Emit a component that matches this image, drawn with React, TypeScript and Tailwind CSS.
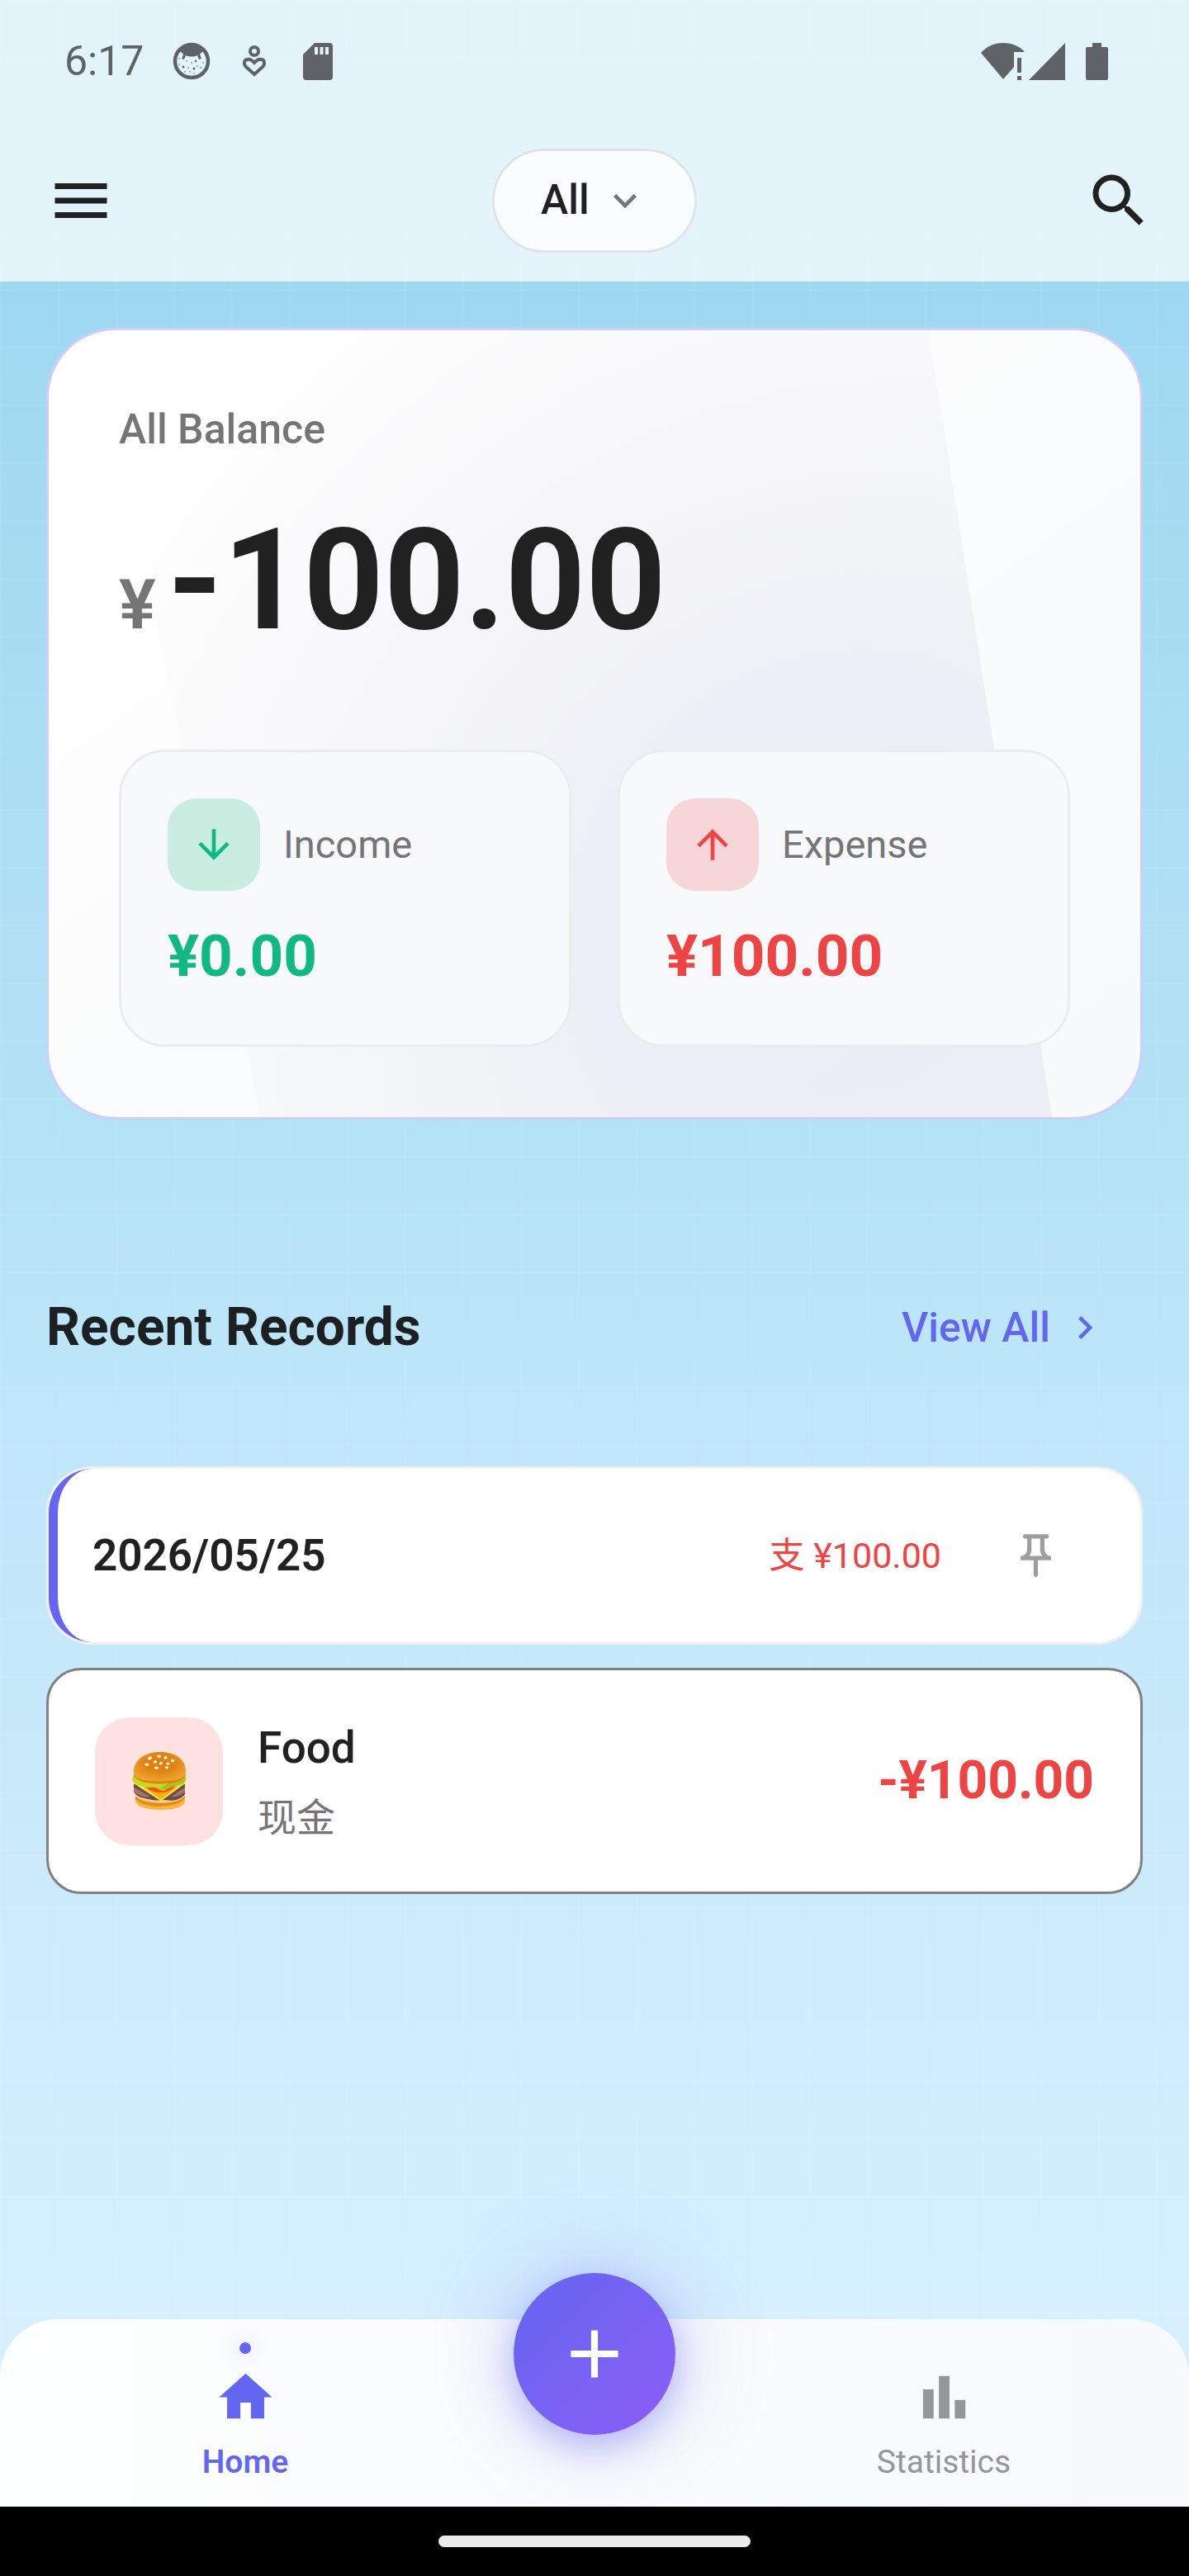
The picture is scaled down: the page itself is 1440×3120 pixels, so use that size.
/**
 * 记账首页
 * 余额卡片 + 最近记录 + 底部导航
 */

import { useState } from 'react';
import type { ReactNode } from 'react';
import {
  MdAdd,
  MdArrowDownward,
  MdArrowUpward,
  MdChevronRight,
  MdHome,
  MdKeyboardArrowDown,
  MdMenu,
  MdSearch,
} from 'react-icons/md';

interface RecordItem {
  id: string;
  category: string;
  account: string;
  amount: string;
}

const records: RecordItem[] = [
  { id: '1', category: 'Food', account: '现金', amount: '-¥100.00' },
];

// 状态栏
function StatusBar() {
  return (
    <div className="flex h-[146px] items-center justify-between pl-[78px] pr-[94px] pt-0.5 text-[#5f6368]">
      <div className="flex items-center">
        <span className="text-[50px] leading-[56px]">6:17</span>
        <svg viewBox="0 0 46 46" className="ml-[35px] size-[46px]" fill="currentColor" aria-hidden="true">
          <circle cx="23" cy="23" r="20" fill="none" stroke="currentColor" strokeWidth="4.5" />
          <path d="M8 9C12 4 17 1 23 1s11 3 15 8l-2 3c-1 0-2 2-3 3l2 5-3 1-2-5c-4 2-10 2-14 0l-2 5-3-1 2-5c-1-1-2-3-3-3z" />
          <circle cx="8" cy="20" r="0.8" />
          <circle cx="8" cy="27" r="0.8" />
          <circle cx="13" cy="30" r="1.500" />
          <circle cx="17" cy="23" r="0.8" />
          <circle cx="19" cy="31" r="0.8" />
          <circle cx="23" cy="25" r="0.8" />
          <circle cx="28" cy="23" r="1.300" />
          <circle cx="30" cy="29" r="0.8" />
          <circle cx="26" cy="32" r="1.500" />
          <circle cx="34" cy="31" r="0.8" />
          <circle cx="37" cy="25" r="0.8" />
          <circle cx="15" cy="36" r="0.8" />
          <circle cx="21" cy="36" r="0.8" />
          <circle cx="26" cy="38" r="0.8" />
        </svg>
        <svg
          viewBox="0 0 30 40"
          className="ml-[38px] h-10 w-[30px]"
          fill="none"
          stroke="currentColor"
          strokeWidth="4"
          aria-hidden="true"
        >
          <circle cx="15" cy="8" r="5" />
          <path d="M15 36 5 27c-3-3-3-9 2-9 4-1 6 2 8 4 2-2 4-5 8-4 5 0 5 6 2 9z" />
        </svg>
        <svg viewBox="0 0 36 45" className="ml-11 h-[45px] w-9" fill="currentColor" aria-hidden="true">
          <path
            fillRule="evenodd"
            d="M14 0h18a4 4 0 0 1 4 4v37a4 4 0 0 1-4 4H4a4 4 0 0 1-4-4V14zM14 5v9h4V5zm6.500 0v9h4V5zM27 5v9h4V5z"
          />
        </svg>
      </div>
      <svg viewBox="0 0 158 48" className="h-12 w-[158px]" fill="currentColor" aria-hidden="true">
        <path d="M27 46 0 14C7 6 16 2 27 2s20 4 26 11H40v18z" />
        <path d="M44 20h5v18h-5zM44 42h5v5h-5zM102 2v45H58z" />
        <path d="M135 2h11v5h6a2 2 0 0 1 2 2v36a2 2 0 0 1-2 2h-23a2 2 0 0 1-2-2V9a2 2 0 0 1 2-2h6z" />
      </svg>
    </div>
  );
}

function Header() {
  const [ledger, setLedger] = useState('all');

  return (
    <header className="bg-white/72">
      <StatusBar />
      <div className="grid h-[195px] grid-cols-[1fr_auto_1fr] items-center px-[43px] pb-0.5">
        <button type="button" aria-label="Menu" className="justify-self-start pl-[13px] text-[#212121]">
          <MdMenu size={84} />
        </button>
        <div className="relative">
          <select
            aria-label="Ledger"
            value={ledger}
            onChange={(e) => setLedger(e.target.value)}
            className="h-[126px] appearance-none rounded-full border-[3px] border-[#e2e3e4] bg-[#fafdff] pl-14 pr-[127px] text-[50px] font-medium text-[#212121]"
          >
            <option value="all">All</option>
          </select>
          <MdKeyboardArrowDown
            size={56}
            className="pointer-events-none absolute right-[59px] top-[35px] text-[#757575]"
          />
        </div>
        <button type="button" aria-label="Search" className="justify-self-end text-[#212121]">
          <MdSearch size={84} />
        </button>
      </div>
    </header>
  );
}

interface StatBoxProps {
  label: string;
  amount: string;
  icon: ReactNode;
  iconClass: string;
  amountClass: string;
}

function StatBox({ label, amount, icon, iconClass, amountClass }: StatBoxProps) {
  return (
    <div className="rounded-[56px] border-[3px] border-[#ebeced] bg-[#f8f9fb] p-14">
      <div className="flex items-center gap-7">
        <div className={`flex size-28 items-center justify-center rounded-[35px] ${iconClass}`}>{icon}</div>
        <span className="text-[47px] leading-[66px] text-[#757575]">{label}</span>
      </div>
      <p className={`mt-7 text-[71px] font-bold leading-[102px] ${amountClass}`}>{amount}</p>
    </div>
  );
}

// 余额卡片
function BalanceCard() {
  return (
    <section className="relative overflow-hidden rounded-[84px] border-[3px] border-[#cfcdf9] bg-linear-to-br from-white to-[#f8f9fb] p-[85px]">
      {/* 斜向光影 */}
      <div className="absolute inset-0 bg-[radial-gradient(circle_at_72%_74%,rgba(90,90,180,0.09)_0px,rgba(90,90,170,0.08)_280px,rgba(90,90,130,0.04)_560px,rgba(90,90,120,0.02)_740px,rgba(90,90,120,0)_960px)] [clip-path:polygon(4.2%_0,80.6%_0,91.9%_100%,19.4%_100%)]" />
      <div className="relative">
        <h2 className="text-[50px] font-medium leading-[70px] text-[#757575]">All Balance</h2>
        <div className="mt-7 flex items-baseline gap-3.5">
          <span className="text-[84px] font-semibold leading-none text-[#757575]">¥</span>
          <span className="text-[170px] font-bold leading-[240px] text-[#212121]">-100.00</span>
        </div>
        <div className="mt-[85px] grid grid-cols-2 gap-14">
          <StatBox
            label="Income"
            amount="¥0.00"
            icon={<MdArrowDownward size={56} />}
            iconClass="bg-[#c9ede1] text-[#10b981]"
            amountClass="text-[#10b981]"
          />
          <StatBox
            label="Expense"
            amount="¥100.00"
            icon={<MdArrowUpward size={56} />}
            iconClass="bg-[#f6d6d8] text-[#ef4444]"
            amountClass="text-[#ef4444]"
          />
        </div>
      </div>
    </section>
  );
}

function Burger() {
  return (
    <svg viewBox="0 0 66 67" preserveAspectRatio="none" className="h-[70px] w-[66px]" aria-hidden="true">
      <defs>
        <radialGradient id="bun" cx="0.5" cy="0.35" r="0.65">
          <stop offset="0" stopColor="#dd7c0c" />
          <stop offset="0.45" stopColor="#e08412" />
          <stop offset="1" stopColor="#f2a736" />
        </radialGradient>
      </defs>
      <path d="M4 50h60v6c0 7-10 11-30 11S4 62 4 55z" fill="#fbb43c" />
      <path d="M4 48h60v5c-4 7-16 10-30 10S7 59 4 54z" fill="#e98a17" />
      <path d="M4 46h60v5c-5 6-17 8-30 8S8 56 4 51z" fill="#ffd08c" />
      <path d="M2 37h62v12c-5 6-14 8-20 7-8-1-14 1-22-1C14 54 5 52 2 46z" fill="#6d4c41" />
      <path d="M2 41c7 3 14 8 20 11-8 2-16-3-20-6zM64 41c-6 4-12 7-16 11 8 0 13-3 16-6z" fill="#a1756b" />
      <path d="M1 36c20 3 44 3 64 0L35 57z" fill="#ffe45c" />
      <path d="M10 38c16 3 32 3 48 0L35 55z" fill="#ffb300" />
      <path d="M15 38h38c-3 6-11 9-19 9s-15-3-19-9z" fill="#f4511e" />
      <path
        d="M2 27c18 5 44 5 62 0l2 4c-2 6-6 8-11 8-6 0-9 3-12 3-4 4-8 3-11 1-4-3-8-2-12-2-5 0-7-2-11-2-5-1-8-4-9-8z"
        fill="#c0df1a"
      />
      <path d="M44 36c4-2 9 0 13-2 3-1 5-2 8-4-1 5-5 7-9 8-5 0-8 3-12 3-4 3-8 3-11 1 4-1 7-3 11-6z" fill="#a5c21c" />
      <path d="M2 25C1 10 14 0 34 0s32 10 31 24c0 8-15 12-32 12S2 32 2 25z" fill="url(#bun)" />
      <path d="M2 25c2 7 14 9 31 9s30-2 32-9c1 8-13 12-31 12S1 33 2 25z" fill="#e08313" />
      <g fill="#fff3d6">
        <ellipse cx="21.500" cy="7" rx="2.600" ry="1.900" transform="rotate(-20 21.500 7)" />
        <ellipse cx="32.500" cy="5" rx="2.600" ry="1.700" />
        <ellipse cx="40.500" cy="6.500" rx="2.100" ry="1.700" transform="rotate(-30 40.500 6.500)" />
        <ellipse cx="49" cy="10" rx="2.300" ry="1.700" />
        <ellipse cx="28" cy="11.500" rx="2.300" ry="1.600" />
        <ellipse cx="35" cy="13" rx="2.300" ry="1.700" transform="rotate(-30 35 13)" />
        <ellipse cx="43.500" cy="13.500" rx="2.200" ry="1.600" />
        <ellipse cx="18" cy="14.500" rx="2.600" ry="1.600" />
        <ellipse cx="29.500" cy="18.500" rx="2.600" ry="1.700" />
        <ellipse cx="42" cy="18" rx="2.200" ry="1.500" />
      </g>
    </svg>
  );
}

// 按日期分组的标题卡片
function DateCard() {
  return (
    <div className="mt-30 rounded-[56px] border-[3px] border-[#f1f1f2] bg-white">
      <div className="flex h-[210px] items-center rounded-[53px] border-l-[11px] border-[#6366f1] pl-[42px] pr-[95px]">
        <h3 className="flex-1 text-[53px] font-semibold leading-[76px] text-[#212121]">2026/05/25</h3>
        <span className="text-[43px] leading-[60px] text-[#ef4444]">支 ¥100.00</span>
        <button type="button" aria-label="Pin" className="ml-[83px] text-[#9e9e9e]">
          <svg viewBox="0 0 24 24" className="size-[63px]" fill="currentColor" aria-hidden="true">
            <path d="M14 4v5c0 1.120.370 2.160 1 3H9c.650-.860 1-1.900 1-3V4h4m3-2H7c-.550 0-1 .450-1 1s.450 1 1 1h1v5c0 1.660-1.340 3-3 3v2h5.970v7l1 1 1-1v-7H19v-2c-1.660 0-3-1.340-3-3V4h1c.550 0 1-.450 1-1s-.450-1-1-1z" />
          </svg>
        </button>
      </div>
    </div>
  );
}

function RecordCard({ record }: { record: RecordItem }) {
  return (
    <li className="flex items-center rounded-[42px] border-[3px] border-[#808080] bg-white p-14">
      <div className="flex size-[155px] items-center justify-center rounded-[42px] bg-[#ffe1e1]">
        <Burger />
      </div>
      <div className="ml-[42px] flex-1">
        <h4 className="text-[53px] font-medium leading-[76px] text-[#212121]">{record.category}</h4>
        <p className="mt-3.5 text-[47px] leading-[66px] text-[#757575]">{record.account}</p>
      </div>
      <span className="text-[64px] font-bold leading-[90px] text-[#ef4444]">{record.amount}</span>
    </li>
  );
}

// 底部导航
function BottomNav() {
  return (
    <nav className="grid h-[227px] grid-cols-[1fr_252px_1fr] rounded-t-[70px] bg-linear-to-r from-[#fdfefe] to-[#f7fafc]">
      <button type="button" aria-current="page" className="flex flex-col items-center pt-7 text-[#6366f1]">
        <span className="size-3.5 rounded-full bg-[#6366f1] shadow-[0_0_28px_7px_rgba(99,102,241,0.12)]" />
        <MdHome size={77} className="mt-3.5" />
        <span className="mt-3 text-[39px] font-semibold leading-[56px]">Home</span>
      </button>
      <button
        type="button"
        aria-label="Add record"
        className="-mt-14 flex size-49 items-center justify-center justify-self-center rounded-full bg-linear-to-br from-[#6366f1] to-[#8b5cf6] text-white shadow-[0_14px_42px_rgba(99,102,241,0.4),0_0_112px_14px_rgba(99,102,241,0.2)]"
      >
        <MdAdd size={98} />
      </button>
      <button type="button" className="flex flex-col items-center pt-14 text-[#949698]">
        <svg viewBox="0 0 24 24" className="size-[77px]" fill="currentColor" aria-hidden="true">
          <path d="M4 9h4v11H4zM16 13h4v7h-4zM10 4h4v16h-4z" />
        </svg>
        <span className="mt-3 text-[39px] leading-[56px]">Statistics</span>
      </button>
    </nav>
  );
}

export default function App() {
  return (
    <div className="flex min-h-screen flex-col bg-[linear-gradient(to_right,rgba(255,255,255,0.05)_2px,transparent_2px),linear-gradient(to_bottom,rgba(255,255,255,0.05)_2px,transparent_2px),linear-gradient(to_bottom,#98d5ee_0%,#9ed8f0_11%,#b5e3f6_45%,#c0e6f9_56%,#cdecfc_76%,#d6f0fe_91%)] bg-[length:70px_70px,70px_70px,100%_100%] font-['Roboto','Noto_Sans_CJK_SC',sans-serif]">
      <Header />
      <main className="flex-1 px-14 pt-14">
        <BalanceCard />
        <section>
          <div className="mt-51 flex h-24 items-center justify-between">
            <h2 className="text-[64px] font-bold leading-[90px] text-[#1c2022]">Recent Records</h2>
            <a href="#records" className="flex items-center gap-3.5 pr-[42px] text-[50px] font-medium leading-[70px] text-[#6366f1]">
              View All
              <MdChevronRight size={56} />
            </a>
          </div>
          <DateCard />
          <ul id="records" className="mt-7">
            {records.map((record) => (
              <RecordCard key={record.id} record={record} />
            ))}
          </ul>
        </section>
      </main>
      <BottomNav />
      <div className="flex h-21 items-center justify-center bg-black">
        <div className="h-3.5 w-[378px] rounded-full bg-[#ececec]" />
      </div>
    </div>
  );
}
